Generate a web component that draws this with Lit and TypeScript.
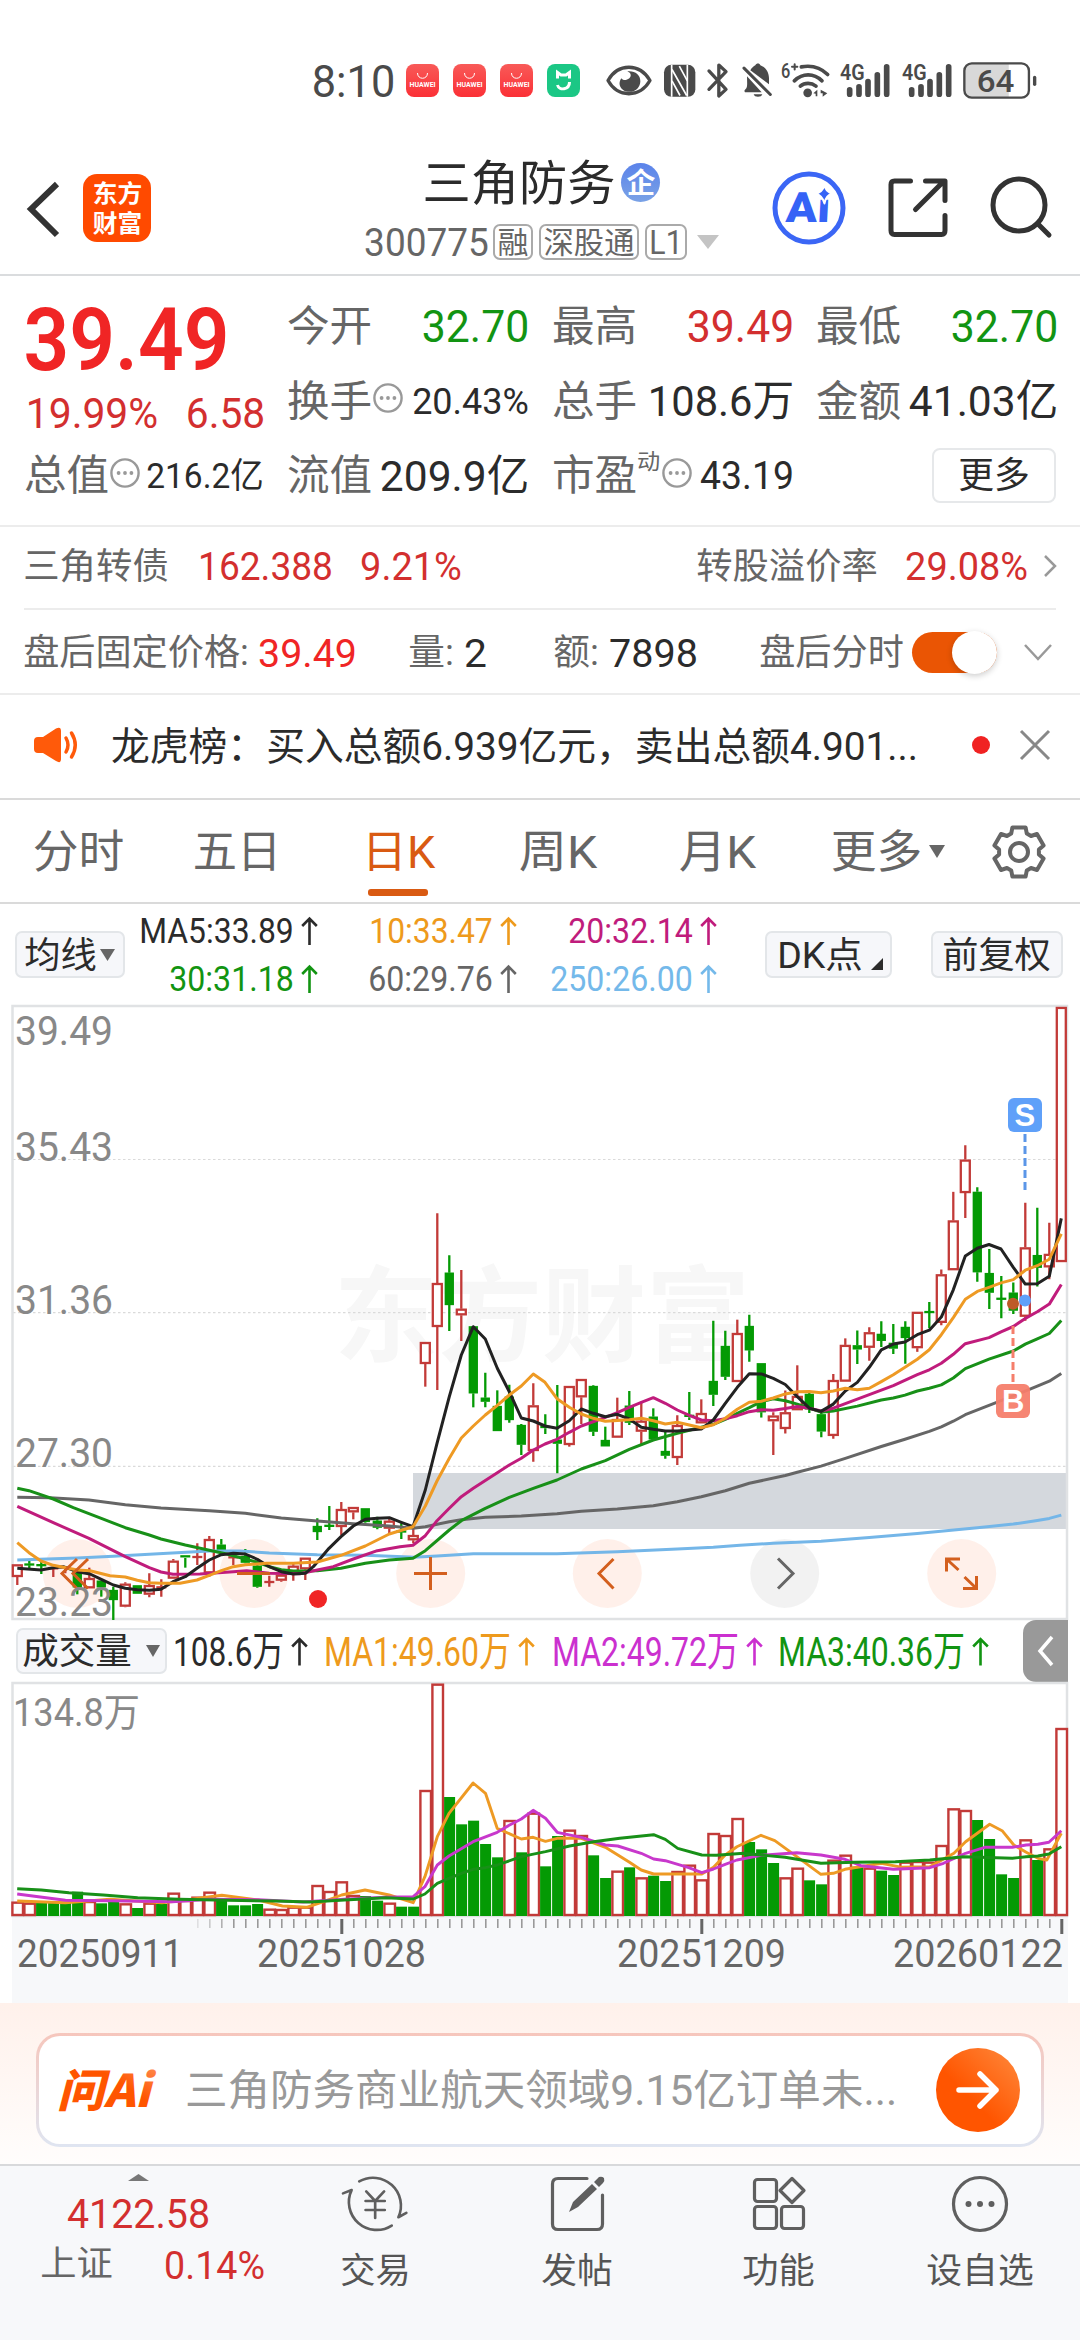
import { LitElement, html, svg, css } from "lit";
import { customElement } from "lit/decorators.js";

/** Single line of text set to an exact ink width, vertically centred on its capitals. */
const fit = (text: string, size: number, width: number, cls = "") => {
  const b = size * 0.05;
  return html`<svg class="t ${cls}" width=${width} height=${size} viewBox="0 0 ${width} ${size}">
    <text x=${-b} y=${size * 0.86} font-size=${size} textLength=${width + 2 * b} lengthAdjust="spacingAndGlyphs">${text}</text>
  </svg>`;
};

const label = (x: number, y: number, text: string, size: number, width: number, cls: string) =>
  svg`<text class=${cls} x=${x - size * 0.05} y=${y} font-size=${size} textLength=${width + size * 0.1} lengthAdjust="spacingAndGlyphs">${text}</text>`;

const upArrow = (w = 17, h = 28) => html`<svg class="arrow" width=${w} height=${h} viewBox="0 0 17 28">
  <path d="M8.5 28V1.5M1.2 9L8.5 1.5L15.8 9" />
</svg>`;

const info = html`<svg class="info" width="30" height="30" viewBox="0 0 30 30">
  <circle cx="15" cy="15" r="13.6" /><circle class="d" cx="8.6" cy="15" r="1.9" /><circle class="d" cx="15" cy="15" r="1.9" /><circle class="d" cx="21.4" cy="15" r="1.9" />
</svg>`;

const X0 = 17.3;
const PITCH = 12;
const cx = (i: number) => X0 + PITCH * i;

type Pt = [number, number];
/** Maps raw sample points of one plot segment to page space. */
const seg = (pts: Pt[], ox: number, sx: number, oy: number, sy: number): Pt[] =>
  pts.map(([x, y]) => [ox + x / sx, oy + y / sy]);
const left = (...p: Pt[]) => seg(p, 0, 3, 1400, 3);
const mid = (...p: Pt[]) => seg(p, 400, 3, 1180, 3);
const right = (...p: Pt[]) => seg(p, 740, 3, 1000, 2.45);
const vol = (...p: Pt[]) => seg(p, 0, 1.452, 1600, 3);
const line = (pts: Pt[], cls: string) =>
  svg`<polyline class="line ${cls}" points=${pts.map(([x, y]) => `${x.toFixed(1)},${y.toFixed(1)}`).join(" ")} />`;

/* colour, high, body top, body bottom, low */
type Candle = [string, number, number, number, number];
const group = (rows: Candle[], oy: number, sy: number): Candle[] =>
  rows.map(([c, h, t, b, l]) => [c, oy + h / sy, oy + t / sy, oy + b / sy, oy + l / sy]);

const candles: Candle[] = [
  ...group([
    ["r", 493, 493, 531, 555], ["g", 483, 491, 496, 507], ["g", 483, 493, 498, 522], ["r", 503, 503, 507, 531],
    ["r", 498, 500, 504, 520], ["g", 512, 512, 562, 583], ["r", 503, 534, 565, 565], ["g", 542, 542, 562, 590],
    ["g", 560, 570, 600, 660], ["r", 547, 551, 620, 622], ["g", 556, 556, 581, 581], ["r", 520, 555, 584, 592],
    ["r", 538, 560, 564, 590], ["r", 477, 482, 536, 536], ["g", 464, 464, 474, 503], ["r", 430, 468, 474, 495],
    ["r", 408, 417, 520, 530], ["g", 417, 434, 450, 450], ["r", 460, 470, 474, 495], ["g", 447, 468, 488, 490],
    ["g", 485, 497, 560, 563], ["r", 527, 544, 548, 560], ["r", 520, 524, 542, 545], ["r", 487, 497, 522, 542],
    ["r", 473, 473, 508, 540], ["g", 355, 378, 396, 420], ["g", 318, 375, 380, 390], ["r", 306, 327, 381, 405],
    ["r", 321, 321, 337, 358], ["g", 325, 325, 366, 368], ["g", 350, 362, 383, 388], ["r", 355, 362, 386, 402],
    ["g", 370, 392, 397, 417], ["r", 385, 405, 421, 430],
  ], 1400, 3),
  ...group([
    ["r", 486, 486, 552, 620], ["r", 100, 309, 441, 630], ["g", 226, 278, 375, 453], ["r", 270, 386, 406, 483],
    ["g", 439, 439, 640, 682], ["g", 578, 653, 665, 682], ["g", 631, 678, 753, 753], ["g", 614, 650, 720, 728],
    ["g", 732, 735, 794, 825], ["r", 610, 676, 813, 845], ["g", 703, 737, 745, 762], ["g", 615, 779, 791, 880],
    ["r", 618, 618, 795, 800], ["r", 597, 597, 652, 732], ["g", 616, 618, 755, 768], ["g", 740, 780, 799, 799],
    ["r", 653, 717, 773, 773], ["g", 633, 677, 728, 735], ["r", 665, 722, 755, 792], ["g", 685, 710, 778, 778],
    ["g", 755, 813, 827, 836], ["r", 706, 735, 834, 855], ["g", 636, 703, 712, 720], ["r", 658, 699, 730, 730],
    ["g", 422, 603, 644, 678], ["g", 452, 498, 590, 600], ["r", 419, 459, 606, 606], ["g", 404, 438, 511, 545],
  ], 1180, 3),
  ...group([
    ["g", 890, 890, 1010, 1023], ["r", 1010, 1018, 1032, 1115], ["r", 957, 1010, 1051, 1062], ["r", 895, 970, 1005, 1005],
    ["g", 962, 965, 1003, 1012], ["g", 1005, 1015, 1057, 1071], ["r", 916, 931, 1068, 1075], ["r", 829, 845, 935, 935],
    ["g", 810, 846, 856, 892], ["r", 802, 814, 852, 884], ["g", 787, 818, 835, 850], ["g", 794, 840, 854, 867],
    ["g", 787, 801, 828, 891], ["r", 764, 764, 853, 862], ["g", 740, 763, 766, 804], ["r", 660, 672, 791, 797],
    ["r", 470, 540, 662, 662], ["r", 356, 391, 473, 534], ["g", 459, 470, 667, 690], ["g", 610, 669, 717, 757],
    ["g", 676, 731, 733, 780], ["g", 692, 717, 761, 769], ["r", 497, 606, 776, 786], ["g", 509, 625, 656, 702],
    ["r", 546, 622, 655, 684], ["r", 17, 17, 642, 642],
  ], 1000, 2.45),
];

const volumes: [string, number][] = [
  ["r", 905], ["r", 908], ["g", 905], ["g", 903], ["g", 905], ["g", 875], ["r", 903], ["g", 910], ["g", 898], ["r", 910],
  ["g", 924], ["r", 908], ["g", 912], ["r", 878], ["r", 900], ["r", 890], ["r", 875], ["g", 898], ["g", 916], ["g", 916],
  ["g", 912], ["r", 926], ["r", 927], ["r", 920], ["r", 920], ["r", 855], ["r", 873], ["r", 844], ["r", 885], ["g", 888],
  ["g", 902], ["r", 908], ["g", 920], ["g", 920], ["r", 570], ["r", 251], ["g", 591], ["g", 673], ["g", 662], ["g", 732],
  ["g", 772], ["r", 660], ["g", 757], ["r", 638], ["g", 799], ["g", 708], ["r", 689], ["r", 705], ["g", 766], ["g", 834],
  ["r", 812], ["g", 802], ["r", 832], ["g", 827], ["g", 843], ["r", 813], ["r", 794], ["r", 838], ["r", 699], ["r", 705],
  ["r", 654], ["g", 726], ["g", 748], ["g", 789], ["r", 832], ["r", 803], ["g", 841], ["g", 853], ["r", 779], ["r", 764],
  ["g", 800], ["r", 803], ["g", 812], ["g", 825], ["r", 785], ["r", 783], ["r", 785], ["r", 735], ["r", 625], ["r", 630],
  ["g", 660], ["g", 717], ["g", 823], ["g", 834], ["r", 718], ["g", 780], ["r", 745], ["r", 384],
];

const ma5 = [
  ...left([52, 505], [123, 510], [160, 503], [190, 500], [232, 515], [270, 522], [304, 538], [340, 555], [376, 565], [412, 569], [448, 571], [483, 568], [519, 545], [556, 530], [591, 505], [628, 480], [664, 464], [700, 460], [736, 462], [772, 478], [808, 500], [844, 515], [880, 522], [916, 520], [940, 500], [987, 445], [1023, 410], [1060, 378], [1096, 358], [1132, 355], [1168, 353], [1204, 367]),
  ...mid([39, 1040], [76, 930], [111, 790], [148, 650], [184, 525], [220, 440], [256, 477], [292, 565], [328, 635], [364, 714], [400, 723], [435, 738], [471, 745], [508, 722], [544, 687], [580, 700], [616, 710], [652, 703], [688, 717], [724, 742], [760, 748], [796, 753], [832, 753], [868, 750], [904, 747], [940, 720], [976, 670], [1012, 622], [1048, 581]),
  ...right([64, 916], [100, 927], [136, 942], [172, 972], [208, 1000], [243, 1008], [280, 990], [316, 958], [352, 937], [388, 900], [424, 857], [460, 843], [495, 838], [532, 820], [568, 809], [604, 777], [640, 710], [676, 627], [712, 608], [747, 599], [783, 610], [820, 655], [856, 696], [892, 695], [928, 677], [964, 535]),
];
const ma10 = [
  ...left([52, 428], [87, 458], [123, 483], [160, 496], [190, 502], [232, 510], [270, 512], [330, 527], [376, 531], [412, 541], [448, 548], [483, 550], [540, 550], [591, 540], [628, 526], [664, 512], [700, 500], [736, 494], [800, 490], [880, 490], [952, 486], [1023, 466], [1096, 438], [1168, 402]),
  ...mid([39, 1040], [76, 978], [111, 903], [148, 835], [184, 774], [220, 738], [256, 705], [292, 676], [328, 645], [364, 618], [400, 582], [435, 607], [471, 656], [508, 682], [544, 702], [580, 715], [616, 724], [688, 719], [724, 715], [760, 722], [796, 732], [832, 727], [868, 735], [904, 743], [940, 734], [976, 715], [1012, 688], [1048, 667]),
  ...right([64, 983], [100, 975], [136, 965], [172, 960], [208, 959], [243, 962], [280, 958], [316, 951], [352, 955], [388, 951], [424, 935], [460, 918], [495, 900], [532, 880], [568, 857], [604, 820], [640, 778], [676, 733], [712, 714], [747, 704], [783, 693], [820, 685], [856, 662], [892, 651], [928, 635], [964, 573]),
];
const ma20 = [
  ...left([52, 319], [160, 368], [267, 415], [376, 470], [448, 503], [483, 516], [519, 523], [600, 522], [700, 515], [740, 512], [808, 520], [900, 521], [952, 510], [1000, 500], [1060, 477], [1132, 452], [1200, 440]),
  ...mid([39, 1096], [76, 1067], [111, 1022], [148, 985], [184, 950], [220, 925], [292, 878], [328, 855], [364, 835], [400, 810], [435, 792], [471, 778], [508, 757], [544, 738], [616, 712], [652, 698], [688, 682], [724, 667], [760, 653], [796, 670], [832, 690], [868, 706], [904, 720], [940, 722], [976, 716], [1012, 707], [1048, 695]),
  ...right([64, 1004], [100, 1005], [136, 1001], [172, 996], [208, 1000], [243, 1007], [280, 1000], [316, 989], [388, 967], [460, 945], [532, 918], [568, 906], [604, 890], [640, 868], [676, 842], [747, 827], [783, 813], [820, 800], [856, 780], [892, 764], [928, 745], [964, 697]),
];
const ma30 = [
  ...left([52, 265], [87, 272], [160, 297], [220, 323], [304, 355], [376, 383], [448, 405], [483, 417], [556, 435], [628, 451], [680, 462], [736, 477], [772, 487], [808, 500], [844, 509], [880, 513], [952, 512], [1023, 505], [1096, 490], [1168, 480]),
  ...mid([39, 1135], [76, 1112], [148, 1050], [184, 1022], [256, 985], [328, 952], [400, 925], [471, 900], [544, 867], [616, 842], [688, 808], [760, 780], [832, 760], [904, 742], [940, 733], [976, 718], [1012, 700], [1048, 683]),
  ...right([64, 984], [100, 977], [136, 982], [172, 990], [208, 1000], [243, 1010], [280, 1007], [352, 995], [424, 980], [460, 975], [495, 968], [532, 958], [568, 951], [604, 943], [640, 926], [676, 903], [747, 880], [820, 860], [856, 843], [892, 830], [928, 817], [964, 785]),
];
const ma60 = [
  ...left([52, 292], [150, 293], [267, 300], [376, 314], [483, 324], [628, 332], [736, 340], [844, 354], [952, 363], [1060, 371], [1168, 378]),
  ...mid([39, 1045], [76, 1040], [148, 1025], [184, 1019], [256, 1012], [364, 1008], [471, 1001], [544, 994], [652, 987], [760, 977], [832, 965], [904, 950], [976, 932], [1048, 910]),
  ...right([28, 1184], [136, 1165], [172, 1157], [243, 1142], [316, 1123], [424, 1094], [495, 1076], [568, 1057], [604, 1046], [640, 1032], [676, 1016], [747, 993], [820, 970], [892, 946], [928, 934], [964, 915]),
];
const ma250 = [
  ...left([52, 480], [232, 474], [340, 469], [448, 463], [628, 453], [720, 453], [808, 459], [952, 464], [1096, 466], [1230, 471]),
  ...mid([39, 1132], [111, 1128], [220, 1121], [471, 1121], [652, 1115], [832, 1107], [940, 1102]),
  ...right([0, 1336], [100, 1331], [243, 1326], [388, 1317], [532, 1307], [712, 1293], [820, 1284], [892, 1275], [928, 1270], [964, 1262]),
];
const vma1 = vol([25, 903], [95, 908], [160, 898], [235, 908], [270, 900], [322, 886], [375, 900], [410, 918], [445, 922], [470, 905], [496, 885], [530, 870], [565, 885], [600, 908], [617, 830], [635, 710], [652, 640], [687, 549], [705, 580], [722, 685], [757, 717], [774, 712], [792, 724], [809, 715], [844, 715], [879, 742], [914, 787], [931, 810], [949, 822], [1019, 822], [1036, 802], [1053, 765], [1070, 740], [1105, 706], [1125, 722], [1157, 770], [1192, 823], [1210, 820], [1227, 808], [1280, 790], [1310, 802], [1350, 800], [1385, 760], [1402, 725], [1437, 673], [1455, 692], [1472, 735], [1490, 757], [1507, 775], [1520, 780], [1541, 700]);
const vma2 = vol([25, 882], [95, 901], [160, 902], [250, 905], [305, 898], [375, 899], [440, 906], [500, 898], [560, 892], [600, 890], [617, 860], [635, 795], [652, 768], [687, 725], [722, 697], [740, 675], [757, 657], [774, 631], [792, 655], [809, 697], [844, 712], [879, 735], [897, 738], [931, 760], [949, 777], [966, 782], [1000, 803], [1019, 818], [1036, 807], [1053, 793], [1070, 780], [1105, 766], [1157, 758], [1192, 765], [1227, 778], [1250, 797], [1297, 808], [1350, 803], [1370, 790], [1402, 760], [1430, 742], [1470, 742], [1490, 735], [1507, 733], [1523, 727], [1541, 692]);
const vma3 = vol([25, 866], [60, 870], [100, 878], [150, 885], [200, 893], [260, 898], [330, 901], [400, 903], [450, 906], [500, 900], [560, 893], [600, 897], [617, 882], [635, 850], [652, 835], [670, 820], [687, 808], [705, 803], [722, 795], [757, 770], [792, 755], [827, 738], [862, 725], [900, 715], [949, 704], [966, 718], [984, 745], [1019, 765], [1040, 766], [1080, 760], [1105, 765], [1140, 772], [1192, 790], [1240, 787], [1300, 785], [1350, 780], [1400, 770], [1470, 775], [1490, 770], [1507, 768], [1523, 762], [1541, 740]);

const text = css`
  * { box-sizing: border-box; }
  svg { display: block; flex: none; overflow: visible; }
  .t, .label { font-family: Roboto, "Noto Sans CJK SC", sans-serif; fill: currentColor; }
  .red { color: #d32f2f; }
  .hot { color: #f02525; }
  .green { color: #129412; }
  .dark { color: #2b2b2b; }
  .grey { color: #666; }
  .b { font-weight: 600; }
`;

@customElement("status-bar")
class StatusBar extends LitElement {
  static styles = [text, css`
    :host { display: grid; height: 161px; align-items: center; grid-template-columns: 92px 47px 47px 47px 59px 58px 43px 35px 40px 58px 62px 61px 74px; padding-left: 314px; color: #4a4a4a; }
    .app { width: 33px; height: 33px; border-radius: 8px; background: linear-gradient(#f85a58, #fb3036); }
    .mi { background: #1bc785; }
    .bag { fill: none; stroke: #fff; stroke-width: 1; }
    .w { fill: none; stroke: #fff; }
    .tiny { fill: #fff; font: 700 6.6px Roboto, sans-serif; }
    .s { fill: none; stroke: #4a4a4a; stroke-linecap: round; stroke-linejoin: round; }
    .f { fill: #4a4a4a; }
    .net { font: 600 64px Roboto, sans-serif; }
    .bat { fill: #d8d8d8; }
  `];
  private huawei() {
    return html`<div class="app"><svg width="33" height="33" viewBox="0 0 33 33">
      <path class="bag" d="M11.5 9c0 7 10 7 10 0" /><text class="tiny" x="3.6" y="22.5" textLength="26" lengthAdjust="spacingAndGlyphs">HUAWEI</text>
    </svg></div>`;
  }
  private signal() {
    return html`<svg width="49" height="37" viewBox="748 36 147 110">
      <text class="f net" x="748" y="91" textLength="74" lengthAdjust="spacingAndGlyphs">4G</text>
      <path class="s" stroke-width="17" d="M777 119V132M805 110V132M832 94V132M860 74V132M888 50V132" />
    </svg>`;
  }
  render() {
    return html`
      ${fit("8:10", 45, 79)}
      ${this.huawei()} ${this.huawei()} ${this.huawei()}
      <div class="app mi"><svg width="33" height="33" viewBox="0 0 33 33">
        <path class="w" stroke-width="3" d="M10.500 14.500V8.500L14 11H19L22.500 8.500V14.500M22.500 18c0 8-10.500 9-12 3" />
      </svg></div>
      <svg width="46" height="37" viewBox="48 36 138 110">
        <path class="s" stroke-width="10" d="M54 91C84 38 149 38 180 91C149 144 84 144 54 91Z" />
        <path class="f" d="M112 64C122 66 126 78 118 84C108 92 98 90 94 84C80 104 96 125 118 125C138 125 151 110 151 93C151 74 134 61 112 64Z" />
      </svg>
      <svg width="32" height="37" viewBox="222 36 96 110">
        <rect class="f" x="222" y="44" width="94" height="96" rx="22" />
        <path class="w" stroke-width="5" d="M245 44V140M292 44V140" />
        <path class="w" stroke-width="5" d="M246 58L290 136M246 92L270 136M268 48L292 92" />
      </svg>
      <svg width="21" height="37" viewBox="352 36 64 110">
        <path class="s" stroke-width="10" d="M358 62L410 118L388 138V44L410 64L358 118" />
      </svg>
      <svg width="30" height="37" viewBox="453 36 90 110">
        <path class="f" d="M478 60C482 52 488 48 493 45C496 38 506 38 508 45C526 52 534 68 534 84V102ZM468 78L512 126H462C458 122 462 118 466 114C470 108 468 92 468 78ZM488 132H514C512 142 490 142 488 132Z" />
        <path class="s" stroke-width="9" d="M459 54L538 133" />
      </svg>
      <svg width="47" height="37" viewBox="574 36 141 110">
        <text class="f" x="571" y="85" font-size="62" font-weight="500" textLength="28" lengthAdjust="spacingAndGlyphs" font-family="Roboto, sans-serif">6</text>
        <path class="s" stroke-width="6" d="M604 50H620M612 42V58" />
        <path class="s" stroke-width="11" stroke-linecap="butt" d="M632 50C665 44 692 54 711 73M611 92C636 68 669 68 694 92M629 108C642 97 662 97 676 108" />
        <circle class="f" cx="651" cy="128" r="13" />
        <path class="f" d="M668 129L680 119V138H675V131ZM690 119L710 129L696 140V129H690Z" />
      </svg>
      ${this.signal()} ${this.signal()}
      <svg width="74" height="37" viewBox="1118 36 220 110">
        <path class="bat" d="M1254 42H1142Q1124 42 1124 60V122Q1124 140 1142 140H1254Z" />
        <rect class="s" stroke-width="7" x="1122" y="40" width="192" height="102" rx="22" />
        <path class="s" stroke-width="10" d="M1331 82V102" />
        <text class="f" x="1159" y="124" font-size="92" font-weight="500" textLength="112" lengthAdjust="spacingAndGlyphs" font-family="Roboto, sans-serif">64</text>
      </svg>`;
  }
}

@customElement("stock-header")
class StockHeader extends LitElement {
  static styles = [text, css`
    :host { display: grid; grid-template-columns: 56px 275px 414px 115.5px 102px 62px; padding-left: 27px; height: 115px; align-items: start; border-bottom: 2px solid #dadcde; }
    .back { margin-top: 20px; fill: none; stroke: #333; stroke-width: 6; }
    .logo { margin-top: 13px; width: 68px; height: 68px; border-radius: 14px; background: #ff4a00; color: #fff; display: grid; align-content: center; justify-content: center; row-gap: 6px; }
    .name { display: flex; align-items: center; height: 43px; gap: 8px; padding-left: 67px; }
    .qi { width: 39px; height: 39px; border-radius: 50%; background: linear-gradient(#5b83ea, #7aa2e6); color: #fff; display: grid; place-items: center; }
    .code { display: flex; align-items: center; gap: 6px; height: 38px; margin-top: 19px; padding-left: 8px; color: #666; }
    .tag { border: 2px solid #aaa; border-radius: 7px; height: 36px; padding: 0 4px; display: grid; place-items: center; }
    .caret { fill: #c4c4c4; margin-left: 4px; }
    .tool { margin-top: 10px; fill: none; stroke: #333; stroke-width: 5; stroke-linecap: round; stroke-linejoin: round; }
    .ring { stroke: #3b66f5; }
    .ai { fill: #3563f6; stroke: none; font: 900 42px Roboto, sans-serif; }
    .star { fill: #3563f6; stroke: #fff; stroke-width: 2; }
  `];
  render() {
    return html`
      <svg class="back" width="33" height="56" viewBox="27 180 33 56"><path d="M57 183L31 208L57 234" /></svg>
      <div class="logo">${fit("东方", 24, 47, "b")}${fit("财富", 24, 47, "b")}</div>
      <div>
        <div class="name">${fit("三角防务", 48, 188, "dark")}<div class="qi">${fit("企", 28, 26, "b")}</div></div>
        <div class="code">${fit("300775", 38, 121)}
          <div class="tag">${fit("融", 30, 28)}</div>
          <div class="tag">${fit("深股通", 30, 88)}</div>
          <div class="tag">${fit("L1", 33, 30)}</div>
          <svg class="caret" width="22" height="14" viewBox="0 0 22 14"><path d="M0 0H22L11 14Z" /></svg>
        </div>
      </div>
      <svg class="tool" width="74" height="74" viewBox="771.5 171.5 74 74">
        <circle class="ring" cx="808.5" cy="208.5" r="34" />
        <text class="ai" x="785" y="223" textLength="44" lengthAdjust="spacingAndGlyphs" transform="skewX(-3) translate(11.5 0)">Ai</text>
        <path class="star" d="M824 185Q825 193 832 194Q825 196 824 204Q822 196 815 194Q822 193 824 185Z" />
      </svg>
      <svg class="tool" width="60" height="74" viewBox="887.5 171.5 60 74">
        <path d="M910 181.500H894Q890.500 181.500 890.500 185V231Q890.500 235 894 235H941Q944.500 235 944.500 231V216M915 210L943 182M925 181.500H944.500V201" />
      </svg>
      <svg class="tool" width="62" height="74" viewBox="989.5 171.5 62 74">
        <circle cx="1018.500" cy="205.500" r="26" /><path d="M1037 224L1048.500 235.500" />
      </svg>`;
  }
}

@customElement("quote-panel")
class QuotePanel extends LitElement {
  static styles = [text, css`
    :host { display: grid; grid-template-columns: 263px 265px 264px 238px; grid-template-rows: 74.5px 74.5px 74.5px; padding: 13px 0 0 26px; height: 251px; border-bottom: 2px solid #ececec; }
    .price { grid-row: span 2; padding: 5px 0 0 2px; }
    .chg { display: flex; justify-content: space-between; width: 235px; margin-top: 9px; }
    .s { display: flex; align-items: center; justify-content: space-between; width: 238px; color: #666; }
    .first { width: 236px; }
    .l { display: flex; align-items: center; gap: 3px; }
    .sup { align-self: start; margin-top: -4px; }
    .info { fill: none; stroke: #999; stroke-width: 2.4; margin-top: -5px; }
    .info .d { fill: #999; stroke: none; }
    .more { width: 124px; height: 55px; border: 2px solid #e6e8ea; border-radius: 8px; display: grid; place-items: center; justify-self: end; align-self: center; }
  `];
  render() {
    return html`
      <div class="price">
        ${fit("39.49", 88, 197, "hot b")}
        <div class="chg">${fit("19.99%", 43, 128, "red")}${fit("6.58", 43, 75, "red")}</div>
      </div>
      <div class="s">${fit("今开", 42, 81)}${fit("32.70", 44, 103, "green")}</div>
      <div class="s">${fit("最高", 42, 81)}${fit("39.49", 44, 103, "red")}</div>
      <div class="s">${fit("最低", 42, 81)}${fit("32.70", 44, 103, "green")}</div>
      <div class="s"><span class="l">${fit("换手", 42, 81)}${info}</span>${fit("20.43%", 37, 113, "dark")}</div>
      <div class="s">${fit("总手", 42, 81)}${fit("108.6万", 43, 142, "dark")}</div>
      <div class="s">${fit("金额", 42, 81)}${fit("41.03亿", 43, 145, "dark")}</div>
      <div class="s first"><span class="l">${fit("总值", 42, 81)}${info}</span>${fit("216.2亿", 35, 114, "dark")}</div>
      <div class="s">${fit("流值", 42, 81)}${fit("209.9亿", 43, 145, "dark")}</div>
      <div class="s"><span class="l">${fit("市盈", 42, 81)}<span class="sup">${fit("动", 22, 21)}</span>${info}</span>${fit("43.19", 38, 90, "dark")}</div>
      <div class="more">${fit("更多", 36, 68, "dark")}</div>`;
  }
}

@customElement("info-rows")
class InfoRows extends LitElement {
  static styles = [text, css`
    :host { display: block; color: #666; }
    .row { display: grid; align-items: center; }
    .bond { height: 83px; margin: 0 24px; padding: 0 0 4px 1px; grid-template-columns: 175px 162px 336px 209px 137px 14px; border-bottom: 2px solid #ececec; }
    .after { height: 85px; padding: 1px 0 0 25px; grid-template-columns: 235px 150px 56px 89px 56px 150px 151px 112px 30px; border-bottom: 2px solid #ececec; }
    .news { height: 105px; padding: 0 0 3px 34px; grid-template-columns: 79px 859px 48px 32px; border-bottom: 2px solid #dadada; }
    .toggle { width: 85px; height: 41px; border-radius: 21px; background: #ea5504; display: flex; justify-content: end; align-items: center; }
    .knob { width: 45px; height: 43px; border-radius: 50%; background: #fff; box-shadow: 0 2px 6px #0003; }
    .thin { fill: none; stroke: #999; stroke-width: 2.5; }
    .close { stroke: #888; stroke-width: 3; }
    .horn { fill: #ff5a0a; }
    .wave { fill: none; stroke: #ff5a0a; stroke-width: 3.5; stroke-linecap: round; }
    .dot { width: 18px; height: 18px; border-radius: 50%; background: #f02222; }
  `];
  render() {
    return html`
      <div class="row bond">
        ${fit("三角转债", 36, 142)}${fit("162.388", 38, 131, "red")}${fit("9.21%", 38, 98, "red")}
        ${fit("转股溢价率", 36, 178)}${fit("29.08%", 38, 119, "red")}
        <svg class="thin" width="12" height="22" viewBox="0 0 12 22"><path d="M1 1L11 11L1 21" /></svg>
      </div>
      <div class="row after">
        ${fit("盘后固定价格:", 36, 222)}${fit("39.49", 39, 95, "hot")}
        ${fit("量:", 36, 42)}${fit("2", 39, 19, "dark")}
        ${fit("额:", 36, 42)}${fit("7898", 39, 85, "dark")}
        ${fit("盘后分时", 36, 141)}
        <div class="toggle"><div class="knob"></div></div>
        <svg class="thin" width="28" height="17" viewBox="0 0 28 17"><path d="M1 1L14 15L27 1" /></svg>
      </div>
      <div class="row news">
        <svg width="44" height="34" viewBox="34 729 44 34">
          <path class="horn" d="M34 742Q34 738 38 738H43L56 729.500Q61 727 61 732V760Q61 765 56 762L43 754H38Q34 754 34 750Z" />
          <path class="wave" d="M66 739Q70 746 66 753M71.500 734Q79 746 71.500 758" />
        </svg>
        ${fit("龙虎榜：买入总额6.939亿元，卖出总额4.901...", 39, 803, "dark")}
        <div class="dot"></div>
        <svg class="thin close" width="30" height="28" viewBox="0 0 30 28"><path d="M1 0L29 28M29 0L1 28" /></svg>
      </div>`;
  }
}

@customElement("period-tabs")
class PeriodTabs extends LitElement {
  static styles = [text, css`
    :host { display: grid; grid-template-columns: 160px 169px 157px 160px 152px 96px 62px 54px; padding: 1px 0 0 35px; height: 104px; align-items: center; color: #666; border-bottom: 2px solid #dadada; }
    .on { color: #d95a12; height: 101px; display: grid; grid-template-rows: 88px 7px; align-items: center; width: 70px; }
    .on .t { margin-top: 12px; }
    .bar { width: 60px; height: 7px; border-radius: 3px; background: #d95a12; margin-left: 4px; }
    .caret { fill: #666; }
    .gear { fill: none; stroke: #666; stroke-width: 4; stroke-linejoin: round; }
  `];
  render() {
    const teeth: string[] = [];
    for (let k = 0; k < 6; k++) {
      for (const [r, d] of [[20, -23], [25.5, -15], [25.5, 15], [20, 23]]) {
        const a = ((k * 60 - 90 + d) * Math.PI) / 180;
        teeth.push(`${(28 + r * Math.cos(a)).toFixed(1)},${(28 + r * Math.sin(a)).toFixed(1)}`);
      }
    }
    return html`
      ${fit("分时", 45, 87)}${fit("五日", 45, 84)}
      <div class="on">${fit("日K", 45, 69)}<div class="bar"></div></div>
      ${fit("周K", 45, 74)}${fit("月K", 45, 73)}${fit("更多", 45, 87)}
      <svg class="caret" width="16" height="13" viewBox="0 0 16 13"><path d="M0 0H16L8 13Z" /></svg>
      <svg class="gear" width="56" height="56" viewBox="0 0 56 56"><polygon points=${teeth.join(" ")} /><circle cx="28" cy="28" r="9" /></svg>`;
  }
}

const legendStyles = css`
  .arrow { fill: none; stroke: currentColor; stroke-width: 2.6; }
  .chip { display: flex; align-items: center; border: 2px solid #e3e6e9; border-radius: 7px; background: #f6f7fa; color: #2b2b2b; }
  .caret { fill: #666; }
  .orange { color: #ee9a1c; }
  .pink { color: #c01c7c; }
  .sky { color: #74b9ea; }
  .violet { color: #cb30cf; }
`;

@customElement("price-chart")
class PriceChart extends LitElement {
  static styles = [text, legendStyles, css`
    :host { display: block; }
    .legend { height: 101px; display: grid; grid-template-columns: 110px 193px 199px 200px 175px 171px; padding-left: 15px; align-items: center; }
    .ma { display: grid; grid-template-rows: 48px 48px; align-items: center; justify-items: end; }
    .v { display: flex; align-items: center; gap: 9px; }
    .chip { height: 47px; justify-self: end; }
    .sel { width: 110px; padding-left: 9px; gap: 5px; }
    .dk { width: 127px; padding-left: 12px; gap: 10px; }
    .dk .caret { fill: #2b2b2b; margin-top: 18px; }
    .fq { width: 132px; padding-left: 11px; }
    .frame { fill: none; stroke: #e0e2e4; stroke-width: 2.5; }
    .grid { stroke: #dadada; stroke-width: 1.2; stroke-dasharray: 2.5 2.5; }
    .band { fill: #d4d8dd; }
    .mark { fill: #f7f7f7; font-family: "Noto Sans CJK SC", sans-serif; font-weight: 700; }
    .tick { fill: #888; font-family: Roboto, sans-serif; }
    .r { stroke: #c23a38; fill: #fff; stroke-width: 2.3; }
    .g { stroke: #049a04; fill: #049a04; stroke-width: 2.3; }
    .line { fill: none; stroke-width: 3; stroke-linejoin: round; }
    .l5 { stroke: #222; } .l10 { stroke: #ee9a24; } .l20 { stroke: #c01c7c; }
    .l30 { stroke: #189018; } .l60 { stroke: #666; } .l250 { stroke: #74b6e8; }
    .btn { fill: #ff5a1417; }
    .off { fill: #0000000d; }
    .glyph { fill: none; stroke: #d35f1e; stroke-width: 3; }
    .dim { stroke: #666; }
    .flag { fill: #fff; font-family: "Liberation Sans", sans-serif; font-weight: 700; }
    .sell { fill: #5fa0f9; } .buy { fill: #f57e6b; fill-opacity: .95; }
    .sd { stroke: #5b96e8; stroke-width: 3; stroke-dasharray: 8 4; }
    .bd { stroke: #f57e6b; stroke-width: 3; stroke-dasharray: 8 4; }
    .spot { fill: #f02525; } .sb { fill: #be5a28; }
  `];
  private ma(t: string, w: number, cls: string) {
    return html`<div class="v ${cls}">${fit(t, 35, w)}${upArrow()}</div>`;
  }
  render() {
    return html`
      <div class="legend">
        <div class="chip sel">${fit("均线", 36, 69)}<svg class="caret" width="15" height="12" viewBox="0 0 15 12"><path d="M0 0H15L7.500 12Z" /></svg></div>
        <div class="ma">${this.ma("MA5:33.89", 151, "dark")}${this.ma("30:31.18", 121, "green")}</div>
        <div class="ma">${this.ma("10:33.47", 120, "orange")}${this.ma("60:29.76", 121, "grey")}</div>
        <div class="ma">${this.ma("20:32.14", 121, "pink")}${this.ma("250:26.00", 139, "sky")}</div>
        <div class="chip dk">${fit("DK点", 36, 82)}<svg class="caret" width="12" height="12" viewBox="0 0 12 12"><path d="M12 0V12H0Z" /></svg></div>
        <div class="chip fq">${fit("前复权", 36, 105)}</div>
      </div>
      <svg width="1080" height="615" viewBox="0 1005 1080 615">
        <text class="mark" x="334" y="1354" font-size="104" textLength="416" lengthAdjust="spacingAndGlyphs">东方财富</text>
        <path class="grid" d="M13 1159.500H1067M13 1312.700H1067M13 1466.300H1067" />
        <rect class="band" x="413" y="1473" width="654" height="56" />
        ${[77.3, 254, 430.7, 607.3, 784.7, 961.7].map((x, i) => svg`<circle class="btn ${i === 4 ? "off" : ""}" cx=${x} cy="1573.500" r="34.500" />`)}
        <rect class="frame" x="12.500" y="1006" width="1054.500" height="613" />
        ${candles.map(([c, h, t, b, l], i) => {
          const w = c === "r" ? 9 : 7;
          const solid = b - t > 3.5;
          return svg`<path class=${c} d="M${cx(i)} ${h}V${t}M${cx(i)} ${b}V${l}" />
            ${solid ? svg`<rect class=${c} x=${cx(i) - w / 2} y=${t + 1} width=${w} height=${Math.max(b - t - 2, 0.5)} />` : svg`<path class=${c} d="M${cx(i) - 5} ${(t + b) / 2}H${cx(i) + 5}" />`}`;
        })}
        ${line(ma250, "l250")}${line(ma60, "l60")}${line(ma30, "l30")}${line(ma20, "l20")}${line(ma5, "l5")}${line(ma10, "l10")}
        <path class="sd" d="M1025 1134V1191" /><rect class="sell" x="1008" y="1098" width="34" height="34" rx="6" />
        <text class="flag" x="1014.500" y="1126" font-size="31" textLength="21">S</text>
        <path class="bd" d="M1013 1326V1384" /><rect class="buy" x="996" y="1384" width="34" height="34" rx="6" />
        <text class="flag" x="1002" y="1412" font-size="31" textLength="22">B</text>
        <circle class="sb" cx="1013" cy="1303.700" r="6" /><circle class="sell" cx="1025" cy="1300.500" r="6" />
        <circle class="spot" cx="318" cy="1599" r="9" />
        <path class="glyph" d="M77 1559L62 1573.500L77 1588.500M88 1559L73 1573.500L88 1588.500M237 1573.500H270M414 1573.500H447M430.500 1557V1590M613.500 1559L599 1573.500L613.500 1588.500" />
        <path class="glyph dim" d="M778 1558.500L793 1573.500L778 1588.500" />
        <path class="glyph" d="M960 1559H946.500V1571.500M946.500 1559L958.500 1570M963 1588.500H976.500V1576M976.500 1588.500L964.500 1577" />
        ${([["39.49", 1045], ["35.43", 1160.5], ["31.36", 1314], ["27.30", 1467], ["23.23", 1616]] as [string, number][]).map(([t, y]) => label(17, y, t, 40, 94, "tick"))}
      </svg>`;
  }
}

@customElement("volume-chart")
class VolumeChart extends LitElement {
  static styles = [text, legendStyles, css`
    :host { display: block; }
    .legend { height: 62px; display: grid; grid-template-columns: 159px 151px 228px 226px 243px 45px; align-items: center; padding-left: 16px; }
    .v { display: flex; align-items: center; gap: 9px; }
    .chip { width: 151px; height: 46px; padding-left: 6px; gap: 16px; }
    .fold { height: 62px; width: 45px; border-radius: 13px 0 0 13px; background: #999; display: grid; place-items: center; }
    .chev { fill: none; stroke: #fff; stroke-width: 3.5; }
    .strip { fill: #f7f8fa; }
    .frame { fill: none; stroke: #e0e2e4; stroke-width: 2.5; }
    .r { stroke: #c23a38; fill: #fff; stroke-width: 2.4; }
    .g { fill: #049a04; }
    .line { fill: none; stroke-width: 2.9; stroke-linejoin: round; }
    .l1 { stroke: #ee9a24; } .l2 { stroke: #c838cc; } .l3 { stroke: #189018; }
    .tk { stroke: #999; stroke-width: 1.6; } .mj { stroke: #666; stroke-width: 3; }
    .val { fill: #888; font-family: Roboto, "Noto Sans CJK SC", sans-serif; }
    .day { fill: #666; font-family: Roboto, sans-serif; }
  `];
  render() {
    return html`
      <div class="legend">
        <div class="chip">${fit("成交量", 36, 106)}<svg class="caret" width="14" height="12" viewBox="0 0 14 12"><path d="M0 0H14L7 12Z" /></svg></div>
        <div class="v dark">${fit("108.6万", 41, 107)}${upArrow(17, 33)}</div>
        <div class="v orange">${fit("MA1:49.60万", 41, 183)}${upArrow(17, 33)}</div>
        <div class="v violet">${fit("MA2:49.72万", 41, 183)}${upArrow(17, 33)}</div>
        <div class="v green">${fit("MA3:40.36万", 41, 183)}${upArrow(17, 33)}</div>
        <div class="fold"><svg class="chev" width="16" height="30" viewBox="0 0 16 30"><path d="M14 1L2 15L14 29" /></svg></div>
      </div>
      <svg width="1080" height="321" viewBox="0 1682 1080 321">
        <rect class="strip" x="12" y="1916" width="1056" height="87" />
        <rect class="frame" x="12.500" y="1683" width="1054.500" height="233" />
        ${label(15, 1726, "134.8万", 39, 123, "val")}
        ${volumes.map(([c, v], i) => {
          const y = 1600 + v / 3;
          return c === "r"
            ? svg`<rect class="r" x=${cx(i) - 4.9} y=${y + 1} width="10.600" height=${1915 - y - 1} />`
            : svg`<rect class="g" x=${cx(i) - 5.2} y=${y} width="11" height=${1916 - y} />`;
        })}
        ${line(vma1, "l1")}${line(vma2, "l2")}${line(vma3, "l3")}
        ${Array.from({ length: 73 }, (_, k) => k + 15).map((i) => {
          const major = i % 30 === 27;
          return svg`<path class=${major ? "mj" : "tk"} opacity=${Math.min(1, (i - 14) / 4)} d="M${cx(i) + 0.5} 1919V${major ? 1934 : 1928}" />`;
        })}
        ${label(19, 1967, "20250911", 38, 162, "day")}${label(259, 1967, "20251028", 38, 165, "day")}
        ${label(619, 1967, "20251209", 38, 165, "day")}${label(895, 1967, "20260122", 38, 166, "day")}
      </svg>`;
  }
}

@customElement("ask-bar")
class AskBar extends LitElement {
  static styles = [text, css`
    :host { display: block; height: 161px; padding: 30px 36px 0; background: linear-gradient(#fff1eb, #fffdfc); }
    .box { height: 114px; border: 3px solid transparent; border-radius: 24px; background: linear-gradient(#fff, #fff) padding-box, linear-gradient(#f6c6bc, #dfe5f1) border-box; display: grid; grid-template-columns: 127px 749px 84px; align-items: center; padding-left: 21px; }
    .brand { font: italic 900 45px "Noto Sans CJK SC", sans-serif; }
    .hint { color: #999; }
    .go { width: 84px; height: 84px; border-radius: 50%; background: linear-gradient(45deg, #ff5500 40%, #ff8b3e); display: grid; place-items: center; }
    .a { fill: none; stroke: #fff; stroke-width: 5.5; stroke-linecap: round; stroke-linejoin: round; }
  `];
  render() {
    return html`<div class="box">
      <svg width="96" height="46" viewBox="0 0 96 46">
        <defs><linearGradient id="o" x1="0" y1="1" x2="1" y2="0"><stop offset=".6" stop-color="#ff5500" /><stop offset="1" stop-color="#ff9a66" /></linearGradient></defs>
        <text class="brand" fill="url(#o)" x="-3" y="40" textLength="93" lengthAdjust="spacingAndGlyphs">问Ai</text>
      </svg>
      <div class="hint">${fit("三角防务商业航天领域9.15亿订单未...", 42, 708)}</div>
      <div class="go"><svg class="a" width="42" height="38" viewBox="0 0 42 38"><path d="M2 19H39M23 3L39 19L23 35" /></svg></div>
    </div>`;
  }
}

@customElement("bottom-nav")
class BottomNav extends LitElement {
  static styles = [text, css`
    :host { display: grid; grid-template-columns: 274px 202px 202px 201px 201px; height: 176px; background: #f7f8fa; border-top: 2px solid #d8d9db; color: #555; align-items: start; }
    .idx { display: grid; grid-template-rows: 7px 48px 46px; padding: 8px 11px 0 42px; align-items: center; }
    .up { fill: #777; margin-left: 86px; }
    .num { margin: 17px 0 0 27px; }
    .pair { display: flex; justify-content: space-between; margin-top: 25px; }
    .item { display: grid; grid-template-rows: 60px 36px; row-gap: 18px; justify-items: center; align-items: center; padding-top: 8px; }
    .i { fill: none; stroke: #5f5f5f; stroke-width: 3.2; stroke-linecap: round; stroke-linejoin: round; }
    .wide { stroke-width: 8; }
    .d { fill: #5f5f5f; stroke: none; }
  `];
  render() {
    return html`
      <div class="idx">
        <svg class="up" width="21" height="7" viewBox="0 0 21 7"><path d="M0 7L10.500 0L21 7Z" /></svg>
        <div class="num">${fit("4122.58", 41, 139, "red")}</div>
        <div class="pair">${fit("上证", 35, 69, "grey")}${fit("0.14%", 38, 97, "red")}</div>
      </div>
      <div class="item">
        <svg class="i wide" width="68" height="60" viewBox="905 373 205 180">
          <path d="M960 395A84 84 0 0 1 1078 503L1102 490M1058 528A84 84 0 0 1 937 421L911 431M981 425L1008 454L1035 425M979 454H1037M979 481H1037M1008 454V505" />
        </svg>${fit("交易", 35, 67)}
      </div>
      <div class="item">
        <svg class="i" width="58" height="60" viewBox="548 2174 58 60">
          <path d="M587 2178.500H558Q552.500 2178.500 552.500 2184V2224Q552.500 2229.500 558 2229.500H597Q602.500 2229.500 602.500 2224V2195" />
          <path class="d" d="M569 2212L573 2202L592 2184L597 2189L578 2207ZM594 2182L599 2177Q602 2176 604 2178Q605 2181 603 2183L599 2187Z" />
        </svg>${fit("发帖", 35, 68)}
      </div>
      <div class="item">
        <svg class="i" width="54" height="60" viewBox="751.500 2174 54 60">
          <rect x="754" y="2179.500" width="22" height="22" rx="3" /><path d="M791.500 2178.500L803.500 2190.500L791.500 2202.500L779.500 2190.500Z" />
          <rect x="754" y="2206.500" width="22" height="22" rx="3" /><rect x="781" y="2206.500" width="22" height="22" rx="3" />
        </svg>${fit("功能", 35, 69)}
      </div>
      <div class="item">
        <svg class="i" width="56" height="60" viewBox="0 0 56 60">
          <circle cx="28" cy="30" r="26.500" /><circle class="d" cx="16.500" cy="30" r="3" /><circle class="d" cx="28" cy="30" r="3" /><circle class="d" cx="39.500" cy="30" r="3" />
        </svg>${fit("设自选", 35, 104)}
      </div>`;
  }
}

@customElement("app-root")
class AppRoot extends LitElement {
  static styles = css`
    :host { display: flex; flex-direction: column; width: 1080px; height: 2340px; background: #fff; overflow: hidden; }
    * { box-sizing: border-box; flex: none; }
  `;
  render() {
    return html`
      <status-bar></status-bar>
      <stock-header></stock-header>
      <quote-panel></quote-panel>
      <info-rows></info-rows>
      <period-tabs></period-tabs>
      <price-chart></price-chart>
      <volume-chart></volume-chart>
      <ask-bar></ask-bar>
      <bottom-nav></bottom-nav>`;
  }
}
